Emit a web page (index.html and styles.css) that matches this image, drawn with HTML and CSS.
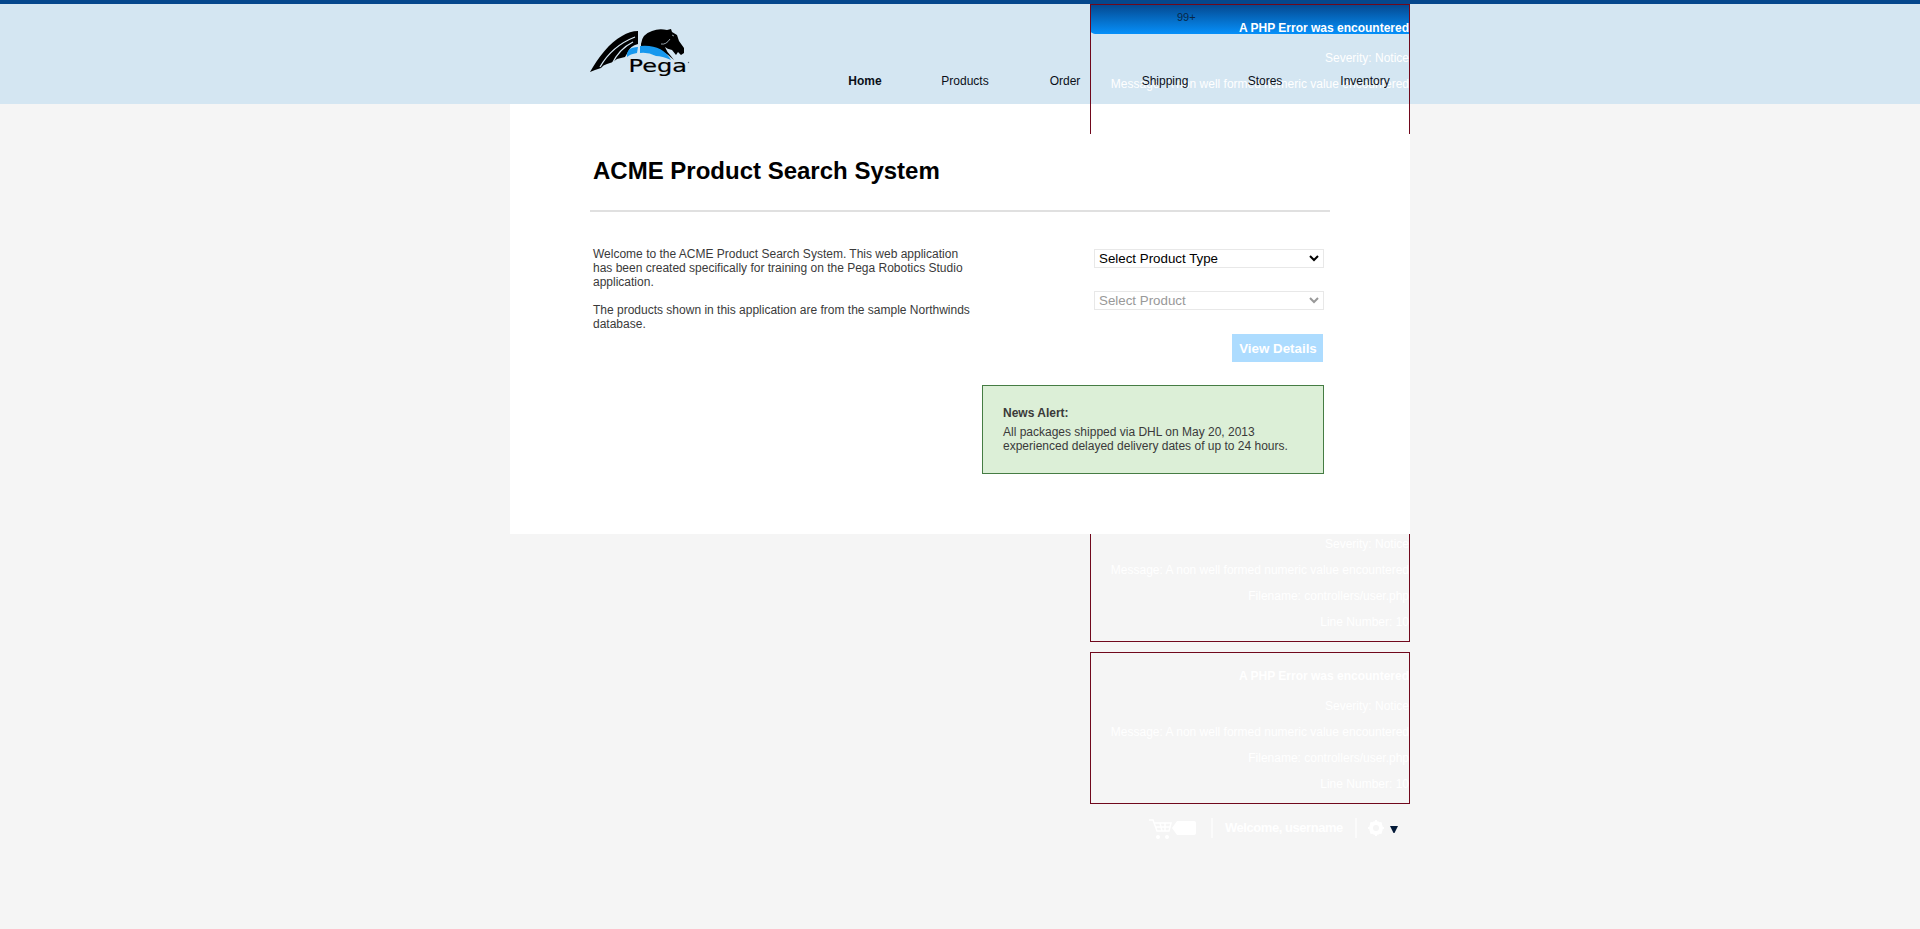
FILE: index.html
```html
<!DOCTYPE html>
<html lang="en">
<head>
<meta charset="utf-8">
<title>ACME Product Search System</title>
<link rel="stylesheet" href="styles.css">
</head>
<body>
<header class="banner">
  <div class="wrap banner-inner">
    <svg class="logo" viewBox="0 0 100 50" role="img" aria-label="Pega">
      <path d="M0 43C8 29 20 13 32 7Q40 2 48 2L48 15Q40 17 38 23L35 28L27 30L23 33L17 35Q13 36 11 39L5 41Z" fill="#000"/>
      <path d="M10 38Q22 17 45 8M22 35Q29 20 43 13" fill="none" stroke="#d4e6f2" stroke-width="1.300"/>
      <path d="M51 15Q52 5 62 2Q69-1 77 1L81 0L82 3L87 6L89 12L94 19L94 24L91 26L88 23L86 26L82 21Q77 20 75 18Q77 23 80 26L84 31Q72 19 51 17Z" fill="#000"/>
      <path d="M71 15Q76 16 80 10M84 7L82 6" fill="none" stroke="#d4e6f2" stroke-width=".7"/>
      <path d="M37 28Q36 18 48 18L47 24Q40 25 37 28ZM50 17Q72 15 81 31Q72 27 66 27Q58 23 50 24Z" fill="#1798ee"/>
      <text class="logo-text" x="38.500" y="43" textLength="58.500" lengthAdjust="spacingAndGlyphs">Pega</text>
      <circle cx="98.500" cy="33.500" r=".7" fill="#567"/>
    </svg>
    <nav class="menu">
      <a class="current">Home</a><a>Products</a><a>Order</a><a>Shipping</a><a>Stores</a><a>Inventory</a>
    </nav>
    <aside class="account">
      <div class="account-tab"></div><span class="count">99+</span>
      <section class="error"><h4>A PHP Error was encountered</h4><p>Severity: Notice</p><p>Message: A non well formed numeric value encountered</p><p>Filename: controllers/user.php</p><p>Line Number: 10</p></section>
      <section class="error"></section>
      <section class="error"></section>
      <section class="error"><h4>A PHP Error was encountered</h4><p>Severity: Notice</p><p>Message: A non well formed numeric value encountered</p><p>Filename: controllers/user.php</p><p>Line Number: 10</p></section>
      <section class="error"><h4>A PHP Error was encountered</h4><p>Severity: Notice</p><p>Message: A non well formed numeric value encountered</p><p>Filename: controllers/user.php</p><p>Line Number: 10</p></section>
      <div class="tools">
        <svg class="cart" viewBox="0 0 50 22"><path d="M1 2H5L9 13H21L23 5H6M8 9H22M12 5L14 13M17 5L17 13" fill="none" stroke="#fff" stroke-width="1.500"/><circle cx="10" cy="19" r="2" fill="#fff"/><circle cx="19" cy="19" r="2" fill="#fff"/><path d="M24 10L29 3H46Q48 3 48 5V15Q48 17 46 17H29Z" fill="#fff"/></svg>
        <i class="bar"></i><span class="welcome">Welcome, username</span><i class="bar"></i>
        <svg class="gear" viewBox="0 0 32 22"><circle cx="8" cy="10" r="5" fill="none" stroke="#fff" stroke-width="4"/><path d="M8 2V18M0 10H16M2.500 4.500L13.500 15.500M13.500 4.500L2.500 15.500" stroke="#fff" stroke-width="2"/><circle cx="8" cy="10" r="3" fill="#f5f5f5"/><path d="M22 8H30L26.500 15H25.500Z" fill="#041a38"/></svg>
      </div>
    </aside>
  </div>
</header>
<main class="wrap page">
  <div class="content">
    <h1>ACME Product Search System</h1>
    <div class="columns">
      <div class="intro">
        <p>Welcome to the ACME Product Search System. This web application<br>has been created specifically for training on the Pega Robotics Studio<br>application.</p>
        <p>The products shown in this application are from the sample Northwinds<br>database.</p>
      </div>
      <div class="search">
        <div class="select">Select Product Type<svg viewBox="0 0 10 7"><path d="M1 1L5 5L9 1"/></svg></div>
        <div class="select disabled">Select Product<svg viewBox="0 0 10 7"><path d="M1 1L5 5L9 1"/></svg></div>
        <button class="details">View Details</button>
        <div class="news"><strong>News Alert:</strong><p>All packages shipped via DHL on May 20, 2013<br>experienced delayed delivery dates of up to 24 hours.</p></div>
      </div>
    </div>
  </div>
</main>
</body>
</html>
```
FILE: styles.css
```css
* { box-sizing: border-box; }
body { margin: 0; height: 929px; overflow: hidden; background: #f5f5f5; font: 12px/14px "Liberation Sans", Arial, sans-serif; color: #3a3a3a; }
p, h1, h4 { margin: 0; }
.wrap { width: 900px; margin: 0 auto; }
.banner { height: 104px; border-top: 4px solid #04478d; background: #d4e6f2; }
.banner-inner { position: relative; height: 100px; display: flex; padding: 25px 0 0 80px; }
.logo { width: 100px; height: 50px; flex: none; overflow: visible; }
.logo-text { font: 18px "DejaVu Sans", sans-serif; stroke: #000; stroke-width: .2px; }
.menu { position: relative; z-index: 2; display: flex; margin: 45px 0 0 125px; }
.menu a { width: 100px; text-align: center; color: #0a0f18; white-space: nowrap; }
.menu .current { font-weight: bold; }
/* The account panel runs beneath the page body. */
.account { position: absolute; z-index: 1; top: 0; right: 0; width: 320px; color: #fff; text-align: right; }
.account-tab { position: absolute; inset: 0 0 auto; height: 30px; background: linear-gradient(#04478d, #0690fa); border-radius: 0 0 0 5px; }
.count { position: absolute; left: 87px; top: 6px; font-size: 11px; color: #092747; }
.error { position: relative; height: 152px; margin-bottom: 10px; padding: 16px 0 0; border: 1px solid #70081c; white-space: nowrap; }
.error h4 { font-size: 12px; line-height: 14px; margin-bottom: 16px; }
.error p { margin-bottom: 12px; }
.tools { display: flex; height: 22px; padding-left: 58px; margin-top: 14px; }
.cart { width: 50px; height: 22px; }
.bar { width: 2px; height: 20px; background: #fbfbfb; margin: 0 12px 0 13px; }
.welcome { width: 117px; font-size: 13px; font-weight: bold; letter-spacing: -.45px; line-height: 20px; white-space: nowrap; text-align: left; }
.gear { width: 32px; height: 22px; margin-left: -1px; }
.page { height: 430px; padding-top: 30px; background: #fff; }
.content { position: relative; z-index: 3; height: 400px; background: #fff; padding: 23px 80px 0; }
h1 { height: 55px; padding-left: 3px; font-size: 24px; line-height: 28px; color: #000; border-bottom: 2px solid #e0e0e0; }
.columns { display: flex; justify-content: space-between; padding: 35px 6px 0 3px; }
.intro { flex: none; }
.intro p { margin-bottom: 14px; }
.search { display: flex; flex-direction: column; align-items: flex-end; padding-top: 2px; }
.select { width: 230px; height: 19px; display: flex; align-items: center; justify-content: space-between; padding: 0 4px 0 4px; border: 1px solid #e8e8e8; font-size: 13.33px; color: #000; margin-bottom: 23px; }
.select svg { width: 10px; height: 7px; fill: none; stroke: currentColor; stroke-width: 2; }
.disabled { color: #999; margin-bottom: 24px; }
.details { width: 91px; height: 28px; border: 0; padding: 0 0 0 1px; background: #addcff; color: #fff; font: bold 13.33px "Liberation Sans", Arial, sans-serif; margin: 0 1px 23px 0; }
.news { width: 342px; height: 89px; padding: 20px 20px 0; background: #dcefd7; border: 1px solid #457c43; white-space: nowrap; }
.news strong { display: block; margin-bottom: 5px; }
```
